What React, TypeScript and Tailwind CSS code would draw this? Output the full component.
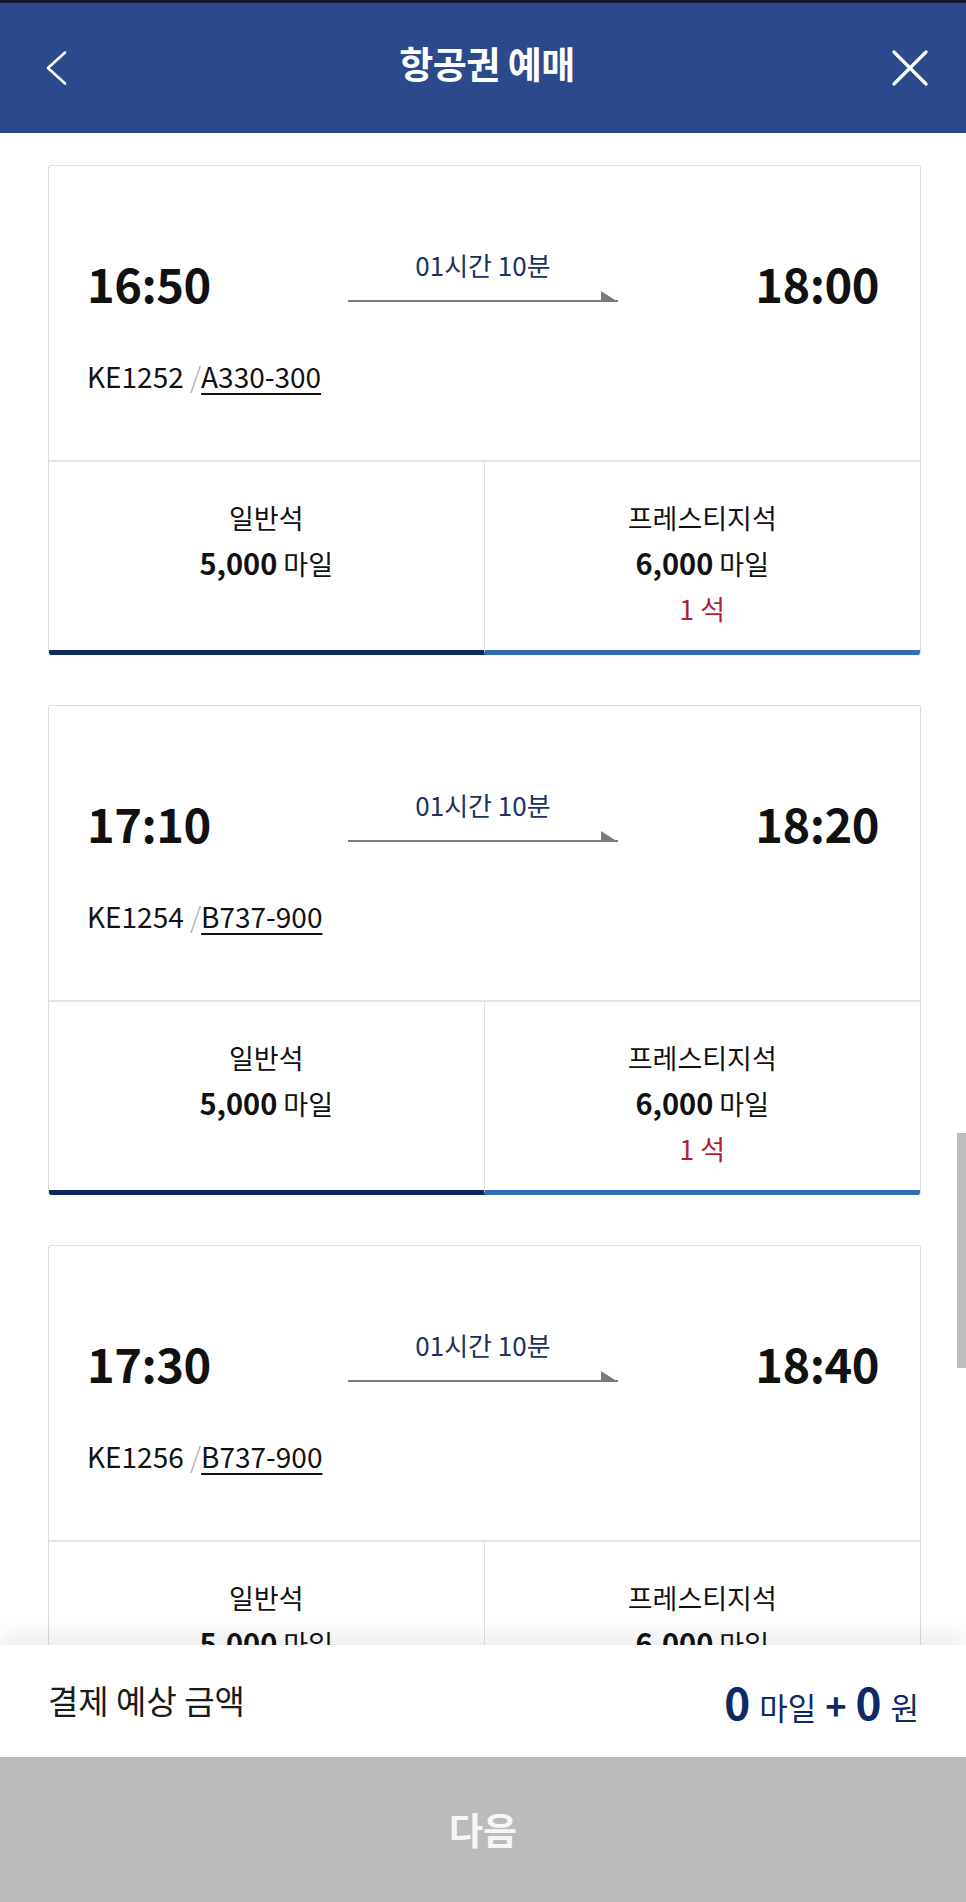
interface Flight {
  departure: string
  arrival: string
  flightNo: string
  aircraft: string
  duration: string
}

const flights: Flight[] = [
  { departure: '16:50', arrival: '18:00', flightNo: 'KE1252', aircraft: 'A330-300', duration: '01시간 10분' },
  { departure: '17:10', arrival: '18:20', flightNo: 'KE1254', aircraft: 'B737-900', duration: '01시간 10분' },
  { departure: '17:30', arrival: '18:40', flightNo: 'KE1256', aircraft: 'B737-900', duration: '01시간 10분' },
]

const font = "font-['Noto_Sans_CJK_KR','Noto_Sans',sans-serif]"

function Header() {
  return (
    <header className="grid h-[133px] grid-cols-[1fr_auto_1fr] items-center border-t-[3px] border-[#161a30] bg-[#2c4a8b] pl-[46px] pr-[38px] text-white">
      <button className="justify-self-start" aria-label="뒤로">
        <svg width="22" height="34" viewBox="0 0 22 34" fill="none">
          <polyline points="19,1.5 2,17 19,32.5" stroke="white" strokeWidth="2.6" strokeLinecap="round" strokeLinejoin="round" />
        </svg>
      </button>
      <h1 className="-mt-[10px] text-[37px] font-bold leading-none tracking-[-0.5px]">항공권 예매</h1>
      <button className="justify-self-end" aria-label="닫기">
        <svg width="36" height="36" viewBox="0 0 36 36" fill="none">
          <path d="M2 2 L34 34 M34 2 L2 34" stroke="white" strokeWidth="3.2" strokeLinecap="round" />
        </svg>
      </button>
    </header>
  )
}

function DurationArrow({ duration }: { duration: string }) {
  return (
    <div className="flex w-[270px] flex-col items-center">
      <span className="text-[26px] leading-none text-[#1c3263]">{duration}</span>
      <svg className="mt-[13px]" width="270" height="11" viewBox="0 0 270 11">
        <rect x="0" y="9" width="270" height="2" fill="#7a7a7a" />
        <polygon points="253,0 270,11 253,11" fill="#7a7a7a" />
      </svg>
    </div>
  )
}

function SeatOption({
  label,
  miles,
  seats,
  tone,
}: {
  label: string
  miles: string
  seats?: string
  tone: 'navy' | 'blue'
}) {
  return (
    <div
      className={
        tone === 'navy'
          ? 'flex h-[193px] flex-col items-center border-r border-b-[5px] border-r-[#dfe3ea] border-b-[#0c2a5f] pt-[33px] text-[27px] leading-[45px] text-[#111]'
          : 'flex h-[193px] flex-col items-center border-b-[5px] border-b-[#316cba] pt-[33px] text-[27px] leading-[45px] text-[#111]'
      }
    >
      <span>{label}</span>
      <span>
        <b className="text-[29px] font-bold">{miles}</b> 마일
      </span>
      {seats && <span className="text-[#b01e36]">{seats}</span>}
    </div>
  )
}

function FlightCard({ flight }: { flight: Flight }) {
  return (
    <div className="ml-[48px] mr-[45px] overflow-hidden rounded-[3px] border border-b-0 border-[#dcdcdc] bg-white">
      <div className="h-[296px] border-b-2 border-[#e4e4e4] pl-[38px] pr-[41px] pt-[86px]">
        <div className="flex items-start justify-between">
          <span className="mt-[7px] text-[47px] font-bold leading-none tracking-[-0.5px] text-[#111]">{flight.departure}</span>
          <DurationArrow duration={flight.duration} />
          <span className="mt-[7px] text-[47px] font-bold leading-none tracking-[-0.5px] text-[#111]">{flight.arrival}</span>
        </div>
        <p className="mt-[56px] text-[28px] leading-none text-[#111]">
          {flight.flightNo} <span className="font-light text-[#b0b0b0]">/</span>
          <span className="underline decoration-2 underline-offset-[5px]">{flight.aircraft}</span>
        </p>
      </div>
      <div className="grid grid-cols-2">
        <SeatOption label="일반석" miles="5,000" tone="navy" />
        <SeatOption label="프레스티지석" miles="6,000" seats="1 석" tone="blue" />
      </div>
    </div>
  )
}

function PaymentBar() {
  return (
    <div className="absolute inset-x-0 bottom-0">
      <div className="flex h-[112px] items-center justify-between bg-white pl-[48px] pr-[47px] shadow-[0_-12px_22px_rgba(0,0,0,0.07)]">
        <span className="text-[33px] text-[#1a1a1a]">결제 예상 금액</span>
        <div className="flex items-baseline gap-[9px] text-[#0c2a66]">
          <span className="text-[44px] font-bold leading-[1.2]">0</span>
          <span className="text-[31px] leading-[1.2]">마일</span>
          <span className="text-[36px] font-bold leading-[1.2]">+</span>
          <span className="text-[44px] font-bold leading-[1.2]">0</span>
          <span className="text-[31px] leading-[1.2]">원</span>
        </div>
      </div>
      <button className="flex h-[145px] w-full items-center justify-center bg-[#bbbbbb] text-[37px] font-bold text-[#f6f6f6]">
        다음
      </button>
    </div>
  )
}

export default function App() {
  return (
    <div className={`relative h-[1902px] w-full overflow-hidden bg-white ${font}`}>
      <Header />
      <main className="flex flex-col gap-[50px] pt-[32px]">
        {flights.map((f) => (
          <FlightCard key={f.flightNo} flight={f} />
        ))}
      </main>
      <div className="absolute right-0 top-[1133px] h-[235px] w-[9px] bg-[#bdbdbd]" />
      <PaymentBar />
    </div>
  )
}
